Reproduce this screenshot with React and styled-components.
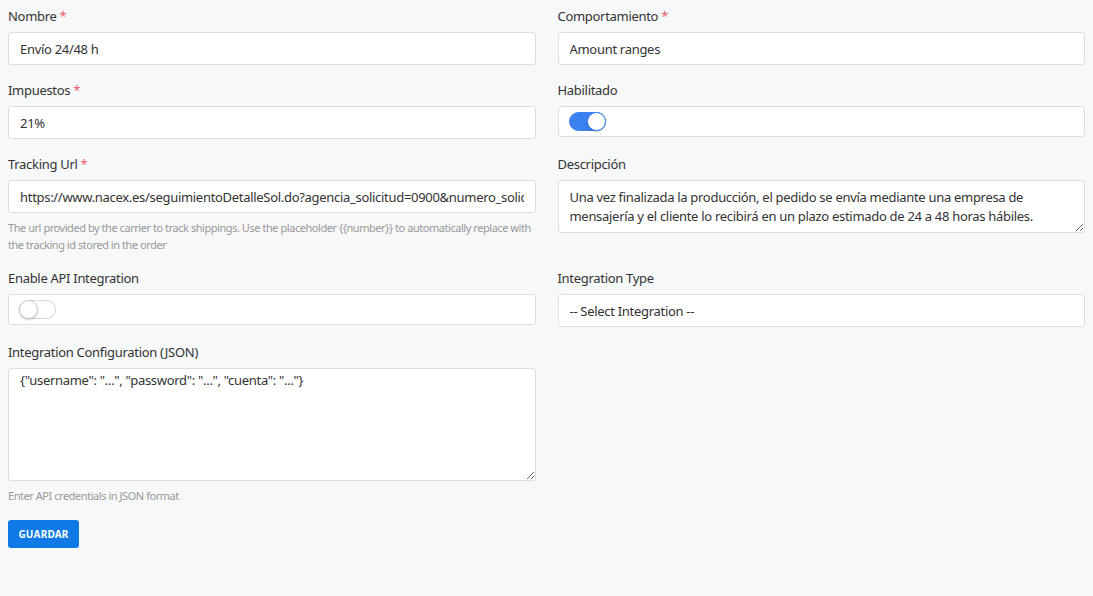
import React from "react";
import styled, { createGlobalStyle } from "styled-components";

const Global = createGlobalStyle`
  html, body { margin: 0; padding: 0; background: #f7f8fa; }
  body { font-family: "Noto Sans", "Open Sans", sans-serif; color: #333; letter-spacing: -0.3px; }
  * { box-sizing: border-box; }
`;

const Page = styled.form`
  padding: 8px;
  min-height: 596px;
  background: #f7f8fa;
`;

const Grid = styled.div`
  display: grid;
  grid-template-columns: 1fr 1fr;
  column-gap: 22px;
  row-gap: 17px;
`;

const Field = styled.div`
  display: flex;
  flex-direction: column;
  min-width: 0;
`;

const Label = styled.label`
  font-size: 13px;
  line-height: 17px;
  color: #333;
  margin-bottom: 7px;
`;

const Req = styled.span`
  color: #ee5a6a;
  margin-left: 3px;
`;

const Input = styled.input`
  height: 33px;
  width: 100%;
  border: 1px solid #dcdee2;
  border-radius: 3px;
  background: #fff;
  padding: 0 11px;
  font: inherit;
  font-size: 13px;
  letter-spacing: -0.3px;
  color: #333;
  outline: none;
`;

const Select = styled.select`
  height: 33px;
  width: 100%;
  border: 1px solid #dcdee2;
  border-radius: 3px;
  background: #fff;
  padding: 0 11px;
  font: inherit;
  font-size: 13px;
  letter-spacing: -0.3px;
  color: #333;
  appearance: none;
  outline: none;
`;

const TextArea = styled.textarea`
  width: 100%;
  height: ${(p) => p.$h}px;
  border: 1px solid #dcdee2;
  border-radius: 3px;
  background: #fff;
  padding: ${(p) => p.$pt}px 11px 4px;
  font: inherit;
  font-size: 13px;
  letter-spacing: -0.3px;
  line-height: 19px;
  color: #333;
  outline: none;
  resize: vertical;
  display: block;
`;

const SwitchBox = styled.div`
  height: 31px;
  border: 1px solid #dcdee2;
  border-radius: 3px;
  background: #fff;
  display: flex;
  align-items: center;
  padding: 0 10px;
`;

const Track = styled.span`
  position: relative;
  display: inline-block;
  width: 37px;
  height: 19px;
  border-radius: 10px;
  background: ${(p) => (p.$on ? "#3b82f0" : "#fff")};
  border: 1px solid ${(p) => (p.$on ? "#3b82f0" : "#d6d6d6")};
`;

const Knob = styled.span`
  position: absolute;
  top: -1px;
  left: ${(p) => (p.$on ? "17px" : "-1px")};
  width: 19px;
  height: 19px;
  border-radius: 50%;
  background: #fff;
  border: 1px solid ${(p) => (p.$on ? "#3b82f0" : "#d0d0d0")};
  box-shadow: 0 1px 2px rgba(0, 0, 0, 0.2);
`;

const Help = styled.div`
  margin-top: 6px;
  font-size: 11px;
  line-height: 17px;
  color: #999;
  letter-spacing: -0.45px;
`;

const Button = styled.button`
  margin-top: 16px;
  width: 71px;
  height: 28px;
  border: none;
  border-radius: 3px;
  background: #0f7ae5;
  color: #fff;
  font-family: "Noto Sans", sans-serif;
  font-size: 10px;
  font-weight: 700;
  letter-spacing: 0.2px;
  cursor: pointer;
`;

const Switch = ({ on }) => (
  <SwitchBox>
    <Track $on={on}>
      <Knob $on={on} />
    </Track>
  </SwitchBox>
);

export default function App() {
  return (
    <>
      <Global />
      <Page onSubmit={(e) => e.preventDefault()}>
        <Grid>
          <Field>
            <Label>Nombre<Req>*</Req></Label>
            <Input defaultValue="Envío 24/48 h" />
          </Field>
          <Field>
            <Label>Comportamiento<Req>*</Req></Label>
            <Select defaultValue="amount">
              <option value="amount">Amount ranges</option>
            </Select>
          </Field>
          <Field>
            <Label>Impuestos<Req>*</Req></Label>
            <Input defaultValue="21%" />
          </Field>
          <Field>
            <Label>Habilitado</Label>
            <Switch on />
          </Field>
          <Field>
            <Label>Tracking Url<Req>*</Req></Label>
            <Input defaultValue="https://www.nacex.es/seguimientoDetalleSol.do?agencia_solicitud=0900&numero_solicitud={{number}}" />
            <Help>
              The url provided by the carrier to track shippings. Use the placeholder {"{{number}}"} to automatically replace with the tracking id stored in the order
            </Help>
          </Field>
          <Field>
            <Label>Descripción</Label>
            <TextArea
              $h={53}
              $pt={7}
              defaultValue={"Una vez finalizada la producción, el pedido se envía mediante una empresa de\nmensajería y el cliente lo recibirá en un plazo estimado de 24 a 48 horas hábiles."}
            />
          </Field>
          <Field>
            <Label>Enable API Integration</Label>
            <Switch />
          </Field>
          <Field>
            <Label>Integration Type</Label>
            <Select defaultValue="">
              <option value="">-- Select Integration --</option>
            </Select>
          </Field>
          <Field>
            <Label>Integration Configuration (JSON)</Label>
            <TextArea
              $h={113}
              $pt={2}
              defaultValue={'{"username": "...", "password": "...", "cuenta": "..."}'}
            />
            <Help>Enter API credentials in JSON format</Help>
          </Field>
        </Grid>
        <Button type="submit">GUARDAR</Button>
      </Page>
    </>
  );
}
